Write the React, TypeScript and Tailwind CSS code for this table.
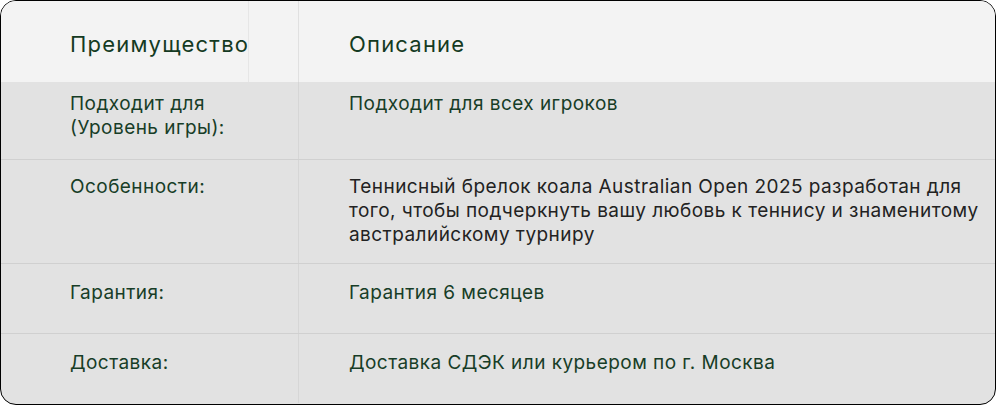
import React from "react";

type Row = {
  label: React.ReactNode;
  value: React.ReactNode;
  h: string;
  pt: string;
  valueClass?: string;
  last?: boolean;
};

const rows: Row[] = [
  {
    label: (
      <>
        Подходит для
        <br />
        (Уровень игры):
      </>
    ),
    value: "Подходит для всех игроков",
    h: "h-[78px]",
    pt: "pt-[10px]",
  },
  {
    label: "Особенности:",
    value:
      "Теннисный брелок коала Australian Open 2025 разработан для того, чтобы подчеркнуть вашу любовь к теннису и знаменитому австралийскому турниру",
    h: "h-[104px]",
    pt: "pt-[15px]",
    valueClass: "text-[#222222]",
  },
  {
    label: "Гарантия:",
    value: "Гарантия 6 месяцев",
    h: "h-[70px]",
    pt: "pt-[17px]",
  },
  {
    label: "Доставка:",
    value: "Доставка СДЭК или курьером по г. Москва",
    h: "h-[69px]",
    pt: "pt-[17px]",
    last: true,
  },
];

export default function App() {
  return (
    <div
      className="w-[996px] h-[405px] bg-white"
      style={{ fontFamily: "Inter, 'Noto Sans', sans-serif" }}
    >
      <div className="w-full h-full border border-black rounded-[16px] overflow-hidden flex flex-col bg-[#e2e2e2]">
        {/* header */}
        <div className="h-[81px] shrink-0 flex bg-[#f3f3f3]">
          <div className="w-[298px] shrink-0 flex border-r border-[#e0e0e0]">
            <div className="w-[248px] pl-[69px] pt-1 flex items-center border-r border-[#e6e6e6] text-[22px] leading-[28px] tracking-[1.2px] text-[#143a22] whitespace-nowrap">
              Преимущество
            </div>
          </div>
          <div className="flex-1 pl-[50px] pt-1 flex items-center text-[22px] leading-[28px] tracking-[1.2px] text-[#143a22]">
            Описание
          </div>
        </div>
        {rows.map((r, i) => (
          <div
            key={i}
            className={`${r.h} shrink-0 flex ${
              r.last ? "" : "border-b border-[#d0d0d0]"
            }`}
          >
            <div
              className={`w-[298px] shrink-0 border-r border-[#d6d6d6] pl-[69px] ${r.pt} text-[19px] leading-[24px] tracking-[0.45px] text-[#173d27]`}
            >
              {r.label}
            </div>
            <div
              className={`flex-1 pl-[50px] pr-[4px] ${r.pt} text-[19px] leading-[24px] tracking-[0.45px] ${
                r.valueClass ?? "text-[#173d27]"
              }`}
            >
              {r.value}
            </div>
          </div>
        ))}
      </div>
    </div>
  );
}
